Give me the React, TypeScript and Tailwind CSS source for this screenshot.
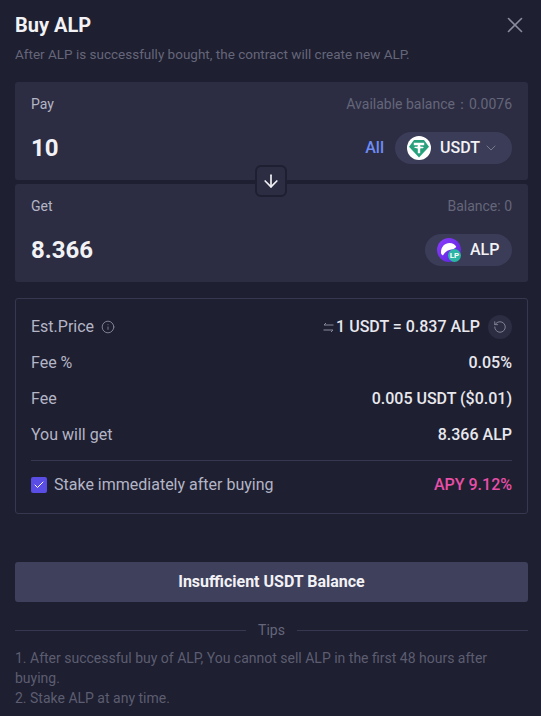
import { ArrowDown, ChevronDown, Info, RotateCcw, X, Check } from "lucide-react";

function UsdtIcon() {
  return (
    <svg width="24" height="24" viewBox="0 0 24 24">
      <circle cx="12" cy="12" r="12" fill="#ffffff" />
      <path d="M7 4h10l5 6.8L12 21.5 2 10.8z" fill="#26a17b" />
      <path d="M6.8 6.8h10.4v2.4h-4v1.3c2 .1 3.6.5 3.6 1s-1.6.9-3.6 1v4.7h-2.4v-4.7c-2-.1-3.6-.5-3.6-1s1.6-.9 3.6-1V9.2h-4z" fill="#ffffff" />
    </svg>
  );
}

function AlpIcon() {
  return (
    <div className="relative h-6 w-6">
      <svg width="24" height="24" viewBox="0 0 24 24">
        <defs>
          <linearGradient id="alp" x1="0" y1="0" x2="1" y2="1">
            <stop offset="0" stopColor="#8b3dff" />
            <stop offset="1" stopColor="#5a22d8" />
          </linearGradient>
        </defs>
        <circle cx="12" cy="12" r="12" fill="url(#alp)" />
        <path d="M4 14.5C4 8.8 7.8 5 12.5 5c3.2 0 5.6 1.4 6.8 4l-3 2.2c-4.5.2-8 1.8-10.3 6.3-1.2-.6-2-1.7-2-3z" fill="#ffffff" />
      </svg>
      <div className="absolute right-0 bottom-0 flex h-[13px] w-[13px] items-center justify-center rounded-full bg-[#2bb5a5] text-[8px] leading-none font-bold text-white">
        LP
      </div>
    </div>
  );
}

function SwapIcon() {
  return (
    <svg width="11" height="11" viewBox="0 0 11 11" fill="none" stroke="#8a8b9c" strokeWidth="1" className="mr-[2px]">
      <path d="M3 1 1 3h9.5M8 10l2-2H.5" />
    </svg>
  );
}

function Row({ label, value }: { label: string; value: string }) {
  return (
    <div className="flex h-9 items-center justify-between text-base">
      <span className="text-[#b4b5c6]">{label}</span>
      <span className="font-medium text-[#e8e8ee]">{value}</span>
    </div>
  );
}

export default function App() {
  return (
    <div
      className="flex h-[716px] w-[541px] flex-col overflow-hidden bg-[#1e1f30] pr-[13px] pl-[15px]"
      style={{ fontFamily: "Roboto, sans-serif" }}
    >
      <div className="flex h-[49px] items-center justify-between pt-[1px]">
        <h1 className="text-xl font-bold text-[#f2f2f6]">Buy ALP</h1>
        <X className="h-[26px] w-[26px] text-[#8a8b9c]" strokeWidth={1.5} />
      </div>
      <p className="text-[13.5px] leading-[10px] text-[#65667a]">
        After ALP is successfully bought, the contract will create new ALP.
      </p>

      <div className="relative mt-[23px] flex flex-col gap-1">
        <div className="h-[98px] rounded-[3px] bg-[#2c2d42] px-4">
          <div className="flex h-11 items-center justify-between text-sm">
            <span className="text-[#b4b5c6]">Pay</span>
            <span className="text-[#65667a]">Available balance：0.0076</span>
          </div>
          <div className="mt-1.5 flex h-8 items-center justify-between">
            <span className="text-2xl font-bold text-[#f2f2f6]">10</span>
            <div className="flex items-center gap-[11px]">
              <span className="text-base font-medium text-[#6f8cf5]">All</span>
              <div className="flex h-8 w-[117px] items-center rounded-full bg-[#3b3c58] pl-3">
                <UsdtIcon />
                <span className="ml-[9px] text-base font-medium text-[#f2f2f6]">USDT</span>
                <ChevronDown className="ml-[3px] h-4 w-4 text-[#77788c]" strokeWidth={1.5} />
              </div>
            </div>
          </div>
        </div>
        <div className="h-[98px] rounded-[3px] bg-[#2c2d42] px-4">
          <div className="flex h-11 items-center justify-between text-sm">
            <span className="text-[#b4b5c6]">Get</span>
            <span className="text-[#65667a]">Balance: 0</span>
          </div>
          <div className="mt-1.5 flex h-8 items-center justify-between">
            <span className="text-2xl font-bold text-[#f2f2f6]">8.366</span>
            <div className="flex h-8 w-[87px] items-center rounded-full bg-[#3b3c58] pl-3">
              <AlpIcon />
              <span className="ml-[9px] text-base font-medium text-[#f2f2f6]">ALP</span>
            </div>
          </div>
        </div>
        <div className="absolute top-[83px] left-[240px] flex h-[32px] w-[32px] items-center justify-center rounded-md border-2 border-[#1e1f30] bg-[#2c2d42]">
          <ArrowDown className="h-[20px] w-[20px] text-[#f2f2f6]" strokeWidth={2} />
        </div>
      </div>

      <div className="mt-4 h-[216px] rounded-[3px] border border-[#37384f] px-[15px] pt-[10px]">
        <div className="flex h-9 items-center justify-between text-base">
          <span className="flex items-center gap-[7px] text-[#b4b5c6]">
            Est.Price
            <Info className="h-[14px] w-[14px] text-[#8a8b9c]" strokeWidth={1.5} />
          </span>
          <span className="flex items-center font-medium text-[#e8e8ee]">
            <SwapIcon />
            1 USDT = 0.837 ALP
            <span className="ml-2 flex h-6 w-6 items-center justify-center rounded-full bg-[#2c2d42]">
              <RotateCcw className="h-[14px] w-[14px] text-[#8a8b9c]" strokeWidth={1.5} />
            </span>
          </span>
        </div>
        <Row label="Fee %" value="0.05%" />
        <Row label="Fee" value="0.005 USDT ($0.01)" />
        <Row label="You will get" value="8.366 ALP" />
        <div className="mt-[7px] h-px bg-[#37384f]" />
        <div className="flex h-[47px] items-center justify-between text-base">
          <span className="flex items-center gap-[7px] text-[#b4b5c6]">
            <span className="flex h-4 w-4 items-center justify-center rounded-[2px] bg-[#5a4de6]">
              <Check className="h-3 w-3 text-white" strokeWidth={2} />
            </span>
            Stake immediately after buying
          </span>
          <span className="font-medium text-[#e84fa8]">APY 9.12%</span>
        </div>
      </div>

      <button className="mt-12 h-10 shrink-0 rounded-[3px] bg-[#3f405c] text-base font-bold text-[#f2f2f6]">
        Insufficient USDT Balance
      </button>

      <div className="mt-[18px] flex items-center gap-3 text-sm text-[#65667a]">
        <div className="h-px flex-1 bg-[#37384f]" />
        <span>Tips</span>
        <div className="h-px flex-1 bg-[#37384f]" />
      </div>
      <div className="mt-2 text-sm leading-5 text-[#5c5d71]">
        <p>1. After successful buy of ALP, You cannot sell ALP in the first 48 hours after buying.</p>
        <p>2. Stake ALP at any time.</p>
      </div>
    </div>
  );
}
